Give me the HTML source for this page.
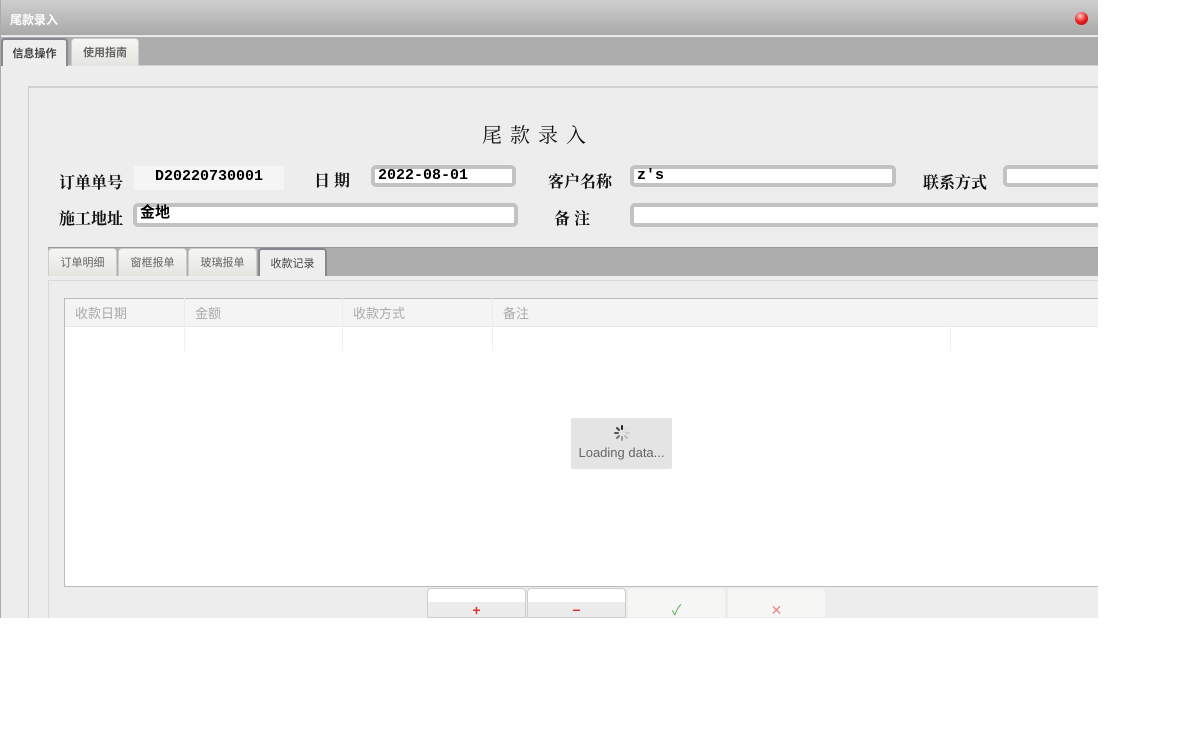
<!DOCTYPE html><html><head><meta charset="utf-8"><style>
*{margin:0;padding:0;box-sizing:border-box}
body{width:1180px;height:752px;background:#fff;position:relative;overflow:hidden;font-family:"Liberation Sans","Noto Sans CJK SC",sans-serif}
.a{position:absolute}
.win{left:0;top:0;width:1098px;height:618px;background:#ededed;overflow:hidden}
.lbl{font-family:"Liberation Serif","Noto Serif CJK SC",serif;font-size:16px;font-weight:bold;color:#111}
.inp{background:#fff;border:4px solid #c2c2c2;border-radius:5px;height:22px;font-family:"Liberation Mono","Noto Sans CJK SC",monospace;font-size:15px;font-weight:bold;padding-left:3px;line-height:13px;color:#000}
.tab{font-size:11px;color:#666;text-align:center;border-radius:4px 4px 0 0;background:linear-gradient(#f6f6f4,#e4e4e0);border:1px solid #ccc;border-bottom:none}
.hd{font-size:13px;color:#aaa;top:298px;height:29px;line-height:31px;padding-left:10px;border-right:1px solid #ececec}
.btn{top:588px;width:99px;height:30px;border:1px solid #ccc;border-radius:4px 4px 0 0;background:linear-gradient(#fff 0,#fff 13px,#ececec 13px);text-align:center;font-size:14px;line-height:42px}
</style></head><body>
<div class="a win">
 <div class="a" style="left:0;top:0;width:1px;height:618px;background:#aaa;z-index:5"></div>
 <div class="a" style="left:0;top:0;width:1098px;height:36px;background:linear-gradient(#cfcfcf,#a9a9a9);border-bottom:1px solid #e6e6e6"></div>
 <div class="a" style="left:10px;top:11px;color:#fff;font-size:12px;font-weight:bold">尾款录入</div>
 <div class="a" style="left:1075px;top:12px;width:13px;height:13px;border-radius:50%;background:radial-gradient(circle at 40% 30%,#fcc,#e22 50%,#a00)"></div>
 <div class="a" style="left:0;top:37px;width:1098px;height:29px;background:#adadad;border-bottom:1px solid #d0d0d0"></div>
 <div class="a tab" style="left:1px;top:38px;width:67px;height:28px;line-height:28px;background:#eee;border:2px solid #8a8690;border-bottom:none;color:#444;font-weight:bold">信息操作</div>
 <div class="a tab" style="left:71px;top:38px;width:68px;height:28px;line-height:28px;font-weight:bold">使用指南</div>
 <div class="a" style="left:28px;top:86px;width:1080px;height:540px;border:1px solid #ccc;border-right:none;border-top:2px solid #d0d0d0"></div>
 <div class="a" style="left:482px;top:119px;font-family:'Liberation Serif','Noto Serif CJK SC',serif;font-size:20px;letter-spacing:8px;color:#111">尾款录入</div>
 <div class="a lbl" style="left:59px;top:170px">订单单号</div>
 <div class="a" style="left:134px;top:166px;width:150px;height:24px;background:#f5f5f5;font-family:'Liberation Mono',monospace;font-weight:bold;font-size:15px;line-height:22px;text-align:center">D20220730001</div>
 <div class="a lbl" style="left:314px;top:168px">日 期</div>
 <div class="a inp" style="left:371px;top:165px;width:145px">2022-08-01</div>
 <div class="a lbl" style="left:548px;top:169px">客户名称</div>
 <div class="a inp" style="left:630px;top:165px;width:266px">z's</div>
 <div class="a lbl" style="left:923px;top:170px">联系方式</div>
 <div class="a inp" style="left:1003px;top:165px;width:120px"></div>
 <div class="a lbl" style="left:59px;top:206px">施工地址</div>
 <div class="a inp" style="left:133px;top:203px;width:385px;height:24px">金地</div>
 <div class="a lbl" style="left:554px;top:206px">备 注</div>
 <div class="a inp" style="left:630px;top:203px;width:500px;height:24px"></div>
 <div class="a" style="left:48px;top:247px;width:1060px;height:29px;background:#adadad;border-top:1px solid #999"></div>
 <div class="a tab" style="left:48px;top:248px;width:69px;height:28px;line-height:29px">订单明细</div>
 <div class="a tab" style="left:118px;top:248px;width:69px;height:28px;line-height:29px">窗框报单</div>
 <div class="a tab" style="left:188px;top:248px;width:69px;height:28px;line-height:29px">玻璃报单</div>
 <div class="a tab" style="left:258px;top:248px;width:69px;height:28px;line-height:29px;background:#eee;border:2px solid #8a8690;border-bottom:none;color:#444">收款记录</div>
 <div class="a" style="left:48px;top:280px;width:1060px;height:340px;border:1px solid #d8d8d8;border-right:none"></div>
 <div class="a" style="left:64px;top:298px;width:1040px;height:289px;background:#fff;border:1px solid #bbb"></div>
 <div class="a" style="left:65px;top:299px;width:1040px;height:28px;background:#f4f4f4;border-bottom:1px solid #e8e8e8"></div>
 <div class="a hd" style="left:65px;width:120px">收款日期</div>
 <div class="a hd" style="left:185px;width:158px">金额</div>
 <div class="a hd" style="left:343px;width:150px">收款方式</div>
 <div class="a hd" style="left:493px;width:458px;border-right:none">备注</div>
 <div class="a" style="left:184px;top:327px;height:24px;border-left:1px solid #f0f0f0"></div>
 <div class="a" style="left:342px;top:327px;height:24px;border-left:1px solid #f0f0f0"></div>
 <div class="a" style="left:492px;top:327px;height:24px;border-left:1px solid #f0f0f0"></div>
 <div class="a" style="left:950px;top:327px;height:24px;border-left:1px solid #f0f0f0"></div>
 <div class="a" style="left:571px;top:418px;width:101px;height:51px;background:#e4e4e4;border-radius:2px;text-align:center;font-size:13px;color:#666">
  <svg width="16" height="16" viewBox="0 0 16 16" style="margin-top:7px"><g stroke-width="2" stroke-linecap="round"><line x1="8" y1="1" x2="8" y2="4" stroke="#222"/><line x1="3" y1="3" x2="5" y2="5" stroke="#444"/><line x1="1" y1="8" x2="4" y2="8" stroke="#555"/><line x1="3" y1="13" x2="5" y2="11" stroke="#777"/><line x1="8" y1="15" x2="8" y2="12" stroke="#999"/><line x1="13" y1="13" x2="11" y2="11" stroke="#bbb"/><line x1="15" y1="8" x2="12" y2="8" stroke="#ccc"/><line x1="13" y1="3" x2="11" y2="5" stroke="#ddd"/></g></svg>
  <div style="margin-top:1px">Loading data...</div></div>
 <div class="a btn" style="left:427px;color:#d33;font-weight:bold">+</div>
 <div class="a btn" style="left:527px;color:#d33;font-weight:bold">−</div>
 <div class="a btn" style="left:627px;background:#f6f6f4;border-color:#eee;color:#6a6">✓</div>
 <div class="a btn" style="left:727px;background:#f6f6f4;border-color:#eee;color:#e88">✕</div>
</div>
</body></html>
